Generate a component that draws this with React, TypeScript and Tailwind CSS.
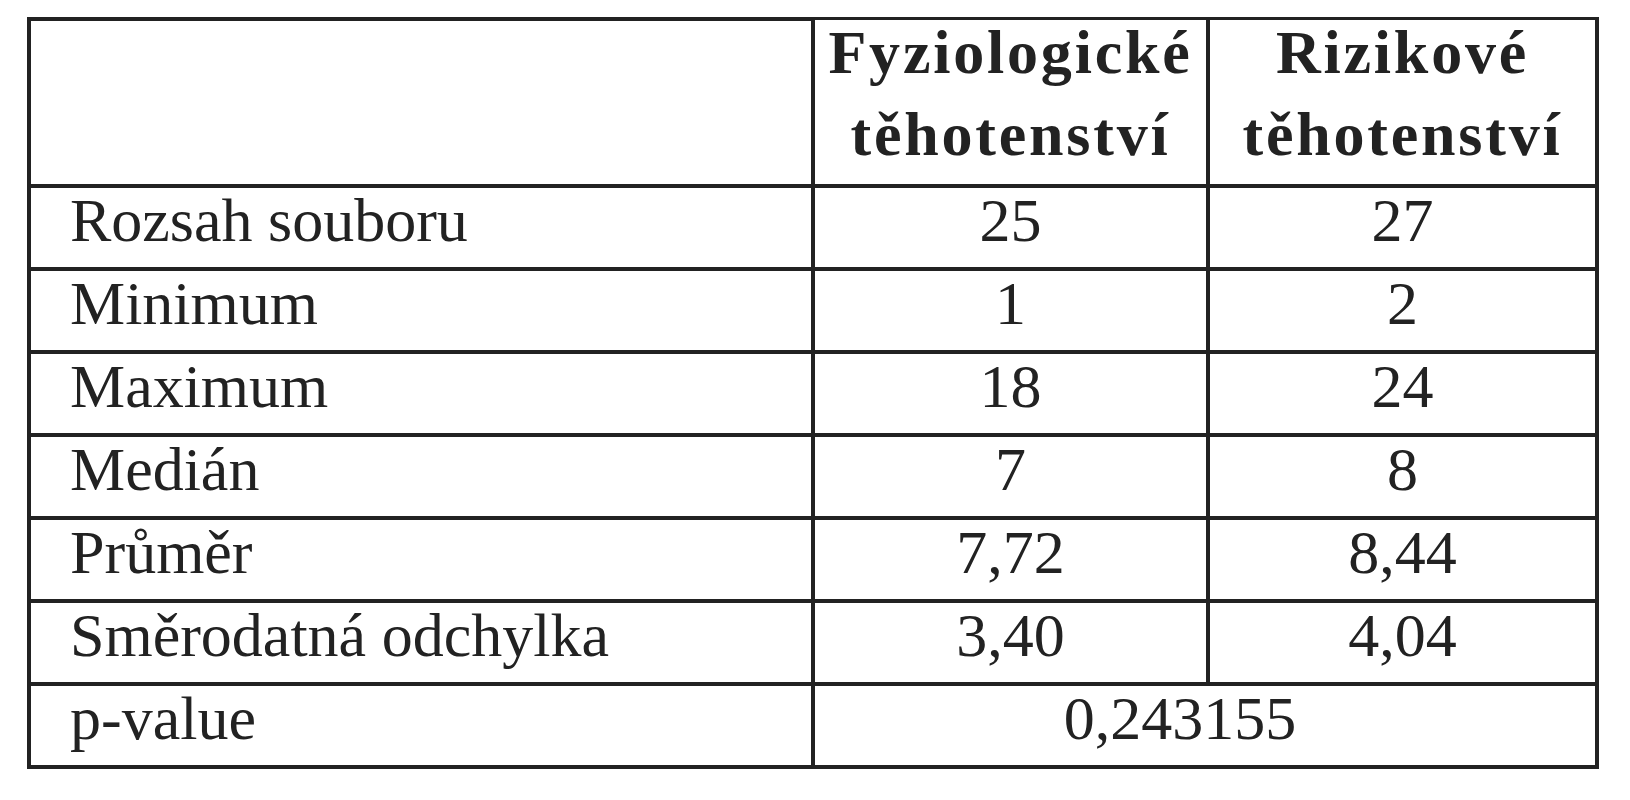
const rows: { label: string; a: string; b: string }[] = [
  { label: "Rozsah souboru", a: "25", b: "27" },
  { label: "Minimum", a: "1", b: "2" },
  { label: "Maximum", a: "18", b: "24" },
  { label: "Medián", a: "7", b: "8" },
  { label: "Průměr", a: "7,72", b: "8,44" },
  { label: "Směrodatná odchylka", a: "3,40", b: "4,04" },
];

const cell = "bg-white text-[62px] leading-[62px] pt-[1px]";
const head = "bg-white text-center text-[62px] font-bold leading-[64px] tracking-[2.8px] -mt-[1px]";

export default function App() {
  return (
    <div
      className="min-h-screen bg-white pl-[27px] pt-[17px] text-[#222]"
      style={{ fontFamily: '"Liberation Serif", "DejaVu Serif", serif' }}
    >
      <div className="grid w-[1572px] grid-cols-[780px_391px_385px] grid-rows-[163px_repeat(7,79px)] gap-[4px] bg-[#222] p-[4px]">
        {/* Header */}
        <div className="bg-white" />
        <div className={head}>
          <div>Fyziologické</div>
          <div className="mt-[18px]">těhotenství</div>
        </div>
        <div className={head}>
          <div>Rizikové</div>
          <div className="mt-[18px]">těhotenství</div>
        </div>

        {/* Body */}
        {rows.map((r) => (
          <div key={r.label} className="contents">
            <div className={`${cell} pl-[39px]`}>{r.label}</div>
            <div className={`${cell} text-center`}>{r.a}</div>
            <div className={`${cell} text-center`}>{r.b}</div>
          </div>
        ))}

        {/* p-value */}
        <div className={`${cell} pl-[39px]`}>p-value</div>
        <div className={`${cell} col-span-2 pr-[50px] text-center`}>0,243155</div>
      </div>
    </div>
  );
}
